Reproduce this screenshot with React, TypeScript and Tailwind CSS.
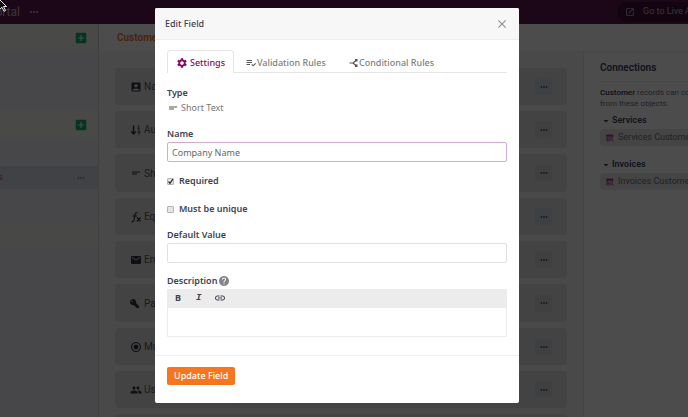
import type { ReactNode } from 'react'
import {
  MdAccountBox,
  MdAddBox,
  MdArrowDropDown,
  MdClose,
  MdEmail,
  MdHelp,
  MdLink,
  MdMoreHoriz,
  MdOpenInNew,
  MdPeople,
  MdPlaylistAddCheck,
  MdRadioButtonChecked,
  MdSettings,
  MdShortText,
} from 'react-icons/md'
import { FaKey } from 'react-icons/fa'

const fields: { label: string; icon: ReactNode }[] = [
  { label: 'Name', icon: <MdAccountBox /> },
  { label: 'Auto Increment', icon: <SortNumericIcon /> },
  { label: 'Short Text', icon: <MdShortText /> },
  { label: 'Equation', icon: <EquationIcon /> },
  { label: 'Email', icon: <MdEmail /> },
  { label: 'Password', icon: <FaKey className="size-[9px] -scale-x-100" /> },
  { label: 'Multiple Choice', icon: <MdRadioButtonChecked /> },
  { label: 'User Roles', icon: <MdPeople /> },
  { label: '', icon: null },
]

function SortNumericIcon() {
  return (
    <svg viewBox="0 0 24 24" className="size-3" fill="none" stroke="currentColor">
      <path d="M7 3v16" strokeWidth="3" />
      <path d="M2.500 15L7 20l4.500-5" strokeWidth="3" />
      <path d="M15.500 5l2-1.500V10M15 10h5" strokeWidth="1.6" />
      <circle cx="17.500" cy="15.500" r="2" strokeWidth="1.6" />
      <path d="M19.500 15.500c0 3-1 5-3 5.500" strokeWidth="1.6" />
    </svg>
  )
}

function EquationIcon() {
  return (
    <svg viewBox="0 0 24 24" className="size-3" fill="none" stroke="currentColor" strokeWidth="2.4">
      <path d="M15 4c-3-1.500-4.500 0-5 3L8 18c-.5 3-2.500 4-5 3M5 10h9" />
      <path d="M14 13l7 8M21 13l-7 8" />
    </svg>
  )
}

function BranchIcon() {
  return (
    <svg viewBox="0 0 20 20" className="size-2.5 text-[#555555]" fill="none" stroke="currentColor" strokeWidth="2.2">
      <path d="M1 10h7l6-5M8 10l6 5" />
      <path d="M12 2h5v5h-5zM12 13h5v5h-5z" fill="currentColor" stroke="none" />
    </svg>
  )
}

function TableSearchIcon() {
  return (
    <svg viewBox="0 0 24 24" className="size-2 shrink-0 text-[#a03e92]" fill="none" stroke="currentColor" strokeWidth="2.5">
      <path d="M2 3h19v4H2z" fill="currentColor" />
      <path d="M3 7v14h8M3 12h8M3 17h7M20 7v4" />
      <circle cx="15.5" cy="15.5" r="4" />
      <path d="M18.5 18.5l4.5 4.5" />
    </svg>
  )
}

function SideSection({ className }: { className: string }) {
  return (
    <div className={`flex items-center justify-end bg-[#f4f4f2] pr-2.5 ${className}`}>
      <button aria-label="Add" className="text-[#17b077]">
        <MdAddBox className="size-3.5" />
      </button>
    </div>
  )
}

function Connection({ title }: { title: string }) {
  return (
    <div className="mb-[11px]">
      <h3 className="flex h-4 items-center font-semibold">
        <MdArrowDropDown className="size-3" />
        {title}
      </h3>
      <a href="#" className="flex h-[17px] items-center gap-1 rounded-l bg-[#e6e6e8] pl-1.5 text-[#6b7084]">
        <TableSearchIcon />
        {title} Customer
      </a>
    </div>
  )
}

function Builder() {
  return (
    <div className="flex h-screen flex-col overflow-hidden bg-white font-['Roboto',sans-serif] whitespace-nowrap">
      <header className="flex h-6 shrink-0 items-center justify-between bg-[#5f1a53] text-[#c9aec5]">
        <div className="flex items-center gap-2">
          <span className="flex w-5 justify-end overflow-hidden text-[12px] leading-5">Portal</span>
          <MdMoreHoriz className="size-3" />
        </div>
        <button className="flex h-5 w-[71px] items-center gap-2 overflow-hidden rounded-l-full bg-[#42103a] pl-2">
          <MdOpenInNew className="size-2.5 shrink-0" />
          Go to Live App
        </button>
      </header>
      <div className="flex min-h-0 flex-1">
        <aside className="w-[98px] shrink-0 bg-[#edeef3]">
          <SideSection className="h-7" />
          <div className="h-[59px]" />
          <SideSection className="h-7" />
          <div className="h-[27px]" />
          <div className="flex h-[23px] items-center justify-between bg-[#d9dee6] pr-3">
            <span className="flex w-[3px] justify-end overflow-hidden font-semibold text-[#f37021]">Customers</span>
            <MdMoreHoriz className="size-2.5 text-[#555b70]" />
          </div>
          <div className="h-[34px]" />
          <div className="h-6 bg-[#f1f1ef]" />
        </aside>
        <div className="flex min-w-0 flex-1 flex-col border-l border-[#d8d8d8]">
          <div className="flex h-[27px] shrink-0 items-center bg-white pl-[18px] text-[10px] font-semibold text-[#f37021] shadow">
            Customer
          </div>
          <div className="flex min-h-0 flex-1">
            <main className="flex flex-1 flex-col gap-1.5 overflow-hidden bg-[#f5f5f5] px-4 pt-[17px]">
              {fields.map((f) => (
                <div
                  key={f.label}
                  className="flex h-[37px] shrink-0 items-center rounded bg-[#dfdfdf] px-[15px] text-[10px] text-[#555b6b] nth-[3n]:h-[38px]"
                >
                  <span className="flex w-3.5 shrink-0 items-center text-[12px] text-[#303545]">{f.icon}</span>
                  <span className="flex-1">{f.label}</span>
                  <button aria-label="Field options" className="flex size-[17px] items-center justify-center rounded-xs bg-[#d0d6de] text-black">
                    <MdMoreHoriz className="size-2.5" />
                  </button>
                </div>
              ))}
            </main>
            <aside className="w-[105px] shrink-0 overflow-hidden border-l border-[#e3e3e3] pt-[9px] pl-4 text-[#3d4460]">
              <h2 className="mb-[5px] border-b border-[#eeeeee] pb-[5px] text-[10px] leading-4 font-semibold">Connections</h2>
              <p className="mb-1 text-[8px] leading-[11px] text-[#6b7084]">
                <b className="font-semibold text-[#3d4460]">Customer</b> records can connect
                <br />
                from these objects.
              </p>
              <Connection title="Services" />
              <Connection title="Invoices" />
            </aside>
          </div>
        </div>
      </div>
    </div>
  )
}

function Checkbox({ label, defaultChecked }: { label: string; defaultChecked?: boolean }) {
  return (
    <label className="flex items-center gap-[5px] font-semibold">
      <span className="relative flex size-[7px]">
        <input
          type="checkbox"
          defaultChecked={defaultChecked}
          className="peer size-full appearance-none rounded-[1px] border border-[#b4b4b4] bg-[#e6e6e6]"
        />
        <svg viewBox="0 0 7 7" className="pointer-events-none absolute inset-0 hidden peer-checked:block" fill="none" stroke="#333333" strokeWidth="1.3">
          <path d="M1.500 3.500l1.500 1.800L5.800 1.200" />
        </svg>
      </span>
      {label}
    </label>
  )
}

function EditFieldDialog() {
  return (
    <form
      role="dialog"
      aria-label="Edit Field"
      className="w-full max-w-[364px] overflow-hidden rounded-xs bg-white leading-4 text-[#3d4152]"
      onSubmit={(e) => e.preventDefault()}
    >
      <div className="flex h-8 items-center justify-between border-b border-[#ececec] bg-[#f7f7f7] px-2.5">
        <h1 className="font-medium">Edit Field</h1>
        <button type="button" aria-label="Close" className="text-[#929292]">
          <MdClose className="size-3.5" />
        </button>
      </div>

      <div className="border-b border-[#f0f0f0] px-3 pt-2.5 pb-[18px]">
        <div className="flex h-[23px] border-b border-[#e5e5e5] font-medium text-[#808080]">
          <button type="button" className="-mb-px flex w-[67px] items-center justify-center gap-0.5 rounded-t border border-b-0 border-[#e5e5e5] bg-white pt-0.5 text-[#850a65]">
            <MdSettings className="size-3" />
            Settings
          </button>
          <button type="button" className="flex w-[103px] items-center pt-1 pl-[11px]">
            <MdPlaylistAddCheck className="size-3 text-[#555555]" />
            Validation Rules
          </button>
          <button type="button" className="flex items-center pt-1 pl-3">
            <BranchIcon />
            Conditional Rules
          </button>
        </div>

        <h2 className="mt-3 font-semibold">Type</h2>
        <p className="flex items-center gap-0.5 leading-[14px] text-[#777777]">
          <MdShortText className="size-3 text-[#555555]" />
          Short Text
        </p>

        <label htmlFor="name" className="mt-[11px] block font-semibold">Name</label>
        <input
          id="name"
          defaultValue="Company Name"
          className="block h-5 w-full rounded-xs border border-[#d9a9d5] px-1 text-[#666666] outline-none"
        />
        <div className="mt-[11px] flex flex-col gap-3">
          <Checkbox label="Required" defaultChecked />
          <Checkbox label="Must be unique" />
        </div>

        <label htmlFor="default-value" className="mt-2.5 block font-semibold">Default Value</label>
        <input id="default-value" className="block h-5 w-full rounded-xs border border-[#dfe0e3] px-1 outline-none" />

        <label htmlFor="description" className="mt-2.5 flex items-center gap-px font-semibold">
          Description
          <MdHelp className="size-3 text-[#858585]" />
        </label>
        <div className="flex h-[19px] items-center bg-[#ececec] pb-0.5 pl-2">
          <button type="button" className="w-[21px] text-left font-bold">B</button>
          <button type="button" className="w-[18px] text-left font-['Liberation_Mono',monospace] font-bold italic">I</button>
          <button type="button" aria-label="Link">
            <MdLink className="size-3" />
          </button>
        </div>
        <textarea id="description" className="block h-[29px] w-full resize-none border border-t-0 border-[#ededed] px-1 outline-none" />
      </div>

      <div className="flex h-[47px] items-start px-3 pt-[11px]">
        <button className="h-[18px] rounded-xs bg-[#f5761f] px-[7px] font-medium text-white">Update Field</button>
      </div>
    </form>
  )
}

export default function App() {
  return (
    <div className="relative h-screen overflow-hidden font-['Noto_Sans',sans-serif] text-[9px]">
      <Builder />
      <div className="absolute inset-0 flex items-start justify-center bg-black/70 pt-2 pr-3.5">
        <EditFieldDialog />
      </div>
      <svg viewBox="0 0 8 12" className="absolute top-0 left-0 h-3 w-2">
        <path d="M0 0l6.5 6.5H3.5l2 4-1.5.8-2-4L0 9" fill="#111111" stroke="#ffffff" strokeWidth="0.9" />
      </svg>
    </div>
  )
}
